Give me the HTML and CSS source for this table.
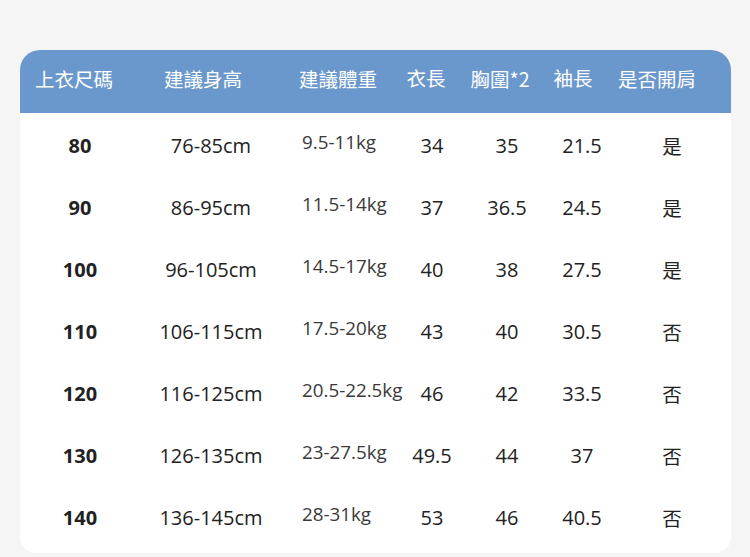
FILE: index.html
```html
<!DOCTYPE html>
<html lang="zh-Hant">
<head>
<meta charset="utf-8">
<link rel="stylesheet" href="styles.css">
</head>
<body>
<div class="card">
  <div class="head">
    <div class="h">上衣尺碼</div>
    <div class="h">建議身高</div>
    <div class="h">建議體重</div>
    <div class="h up">衣長</div>
    <div class="h">胸圍*2</div>
    <div class="h up">袖長</div>
    <div class="h">是否開肩</div>
  </div>
  <div class="body">
    <div class="row"><div class="size">80</div><div>76-85cm</div><div class="wt">9.5-11kg</div><div>34</div><div>35</div><div>21.5</div><div class="cjk">是</div></div>
    <div class="row"><div class="size">90</div><div>86-95cm</div><div class="wt">11.5-14kg</div><div>37</div><div>36.5</div><div>24.5</div><div class="cjk">是</div></div>
    <div class="row"><div class="size">100</div><div>96-105cm</div><div class="wt">14.5-17kg</div><div>40</div><div>38</div><div>27.5</div><div class="cjk">是</div></div>
    <div class="row"><div class="size">110</div><div>106-115cm</div><div class="wt">17.5-20kg</div><div>43</div><div>40</div><div>30.5</div><div class="cjk">否</div></div>
    <div class="row"><div class="size">120</div><div>116-125cm</div><div class="wt">20.5-22.5kg</div><div>46</div><div>42</div><div>33.5</div><div class="cjk">否</div></div>
    <div class="row"><div class="size">130</div><div>126-135cm</div><div class="wt">23-27.5kg</div><div>49.5</div><div>44</div><div>37</div><div class="cjk">否</div></div>
    <div class="row"><div class="size">140</div><div>136-145cm</div><div class="wt">28-31kg</div><div>53</div><div>46</div><div>40.5</div><div class="cjk">否</div></div>
  </div>
</div>
</body>
</html>
```

FILE: styles.css
```css
html, body {
  margin: 0;
  padding: 0;
  background: #f5f5f5;
}
body {
  width: 750px;
  height: 557px;
  overflow: hidden;
  font-family: "Open Sans", "Noto Sans CJK TC", sans-serif;
  color: #222;
}
.card {
  margin: 50px 0 0 20px;
  width: 711px;
  height: 503px;
  background: #fff;
  border-radius: 20px 20px 16px 16px;
  overflow: hidden;
}
.head {
  height: 63px;
  background: #6b98cc;
  display: grid;
  grid-template-columns: 108px 150px 120px 56px 92px 54px 114px;
  align-items: center;
  color: #fff;
  font-family: "Noto Sans CJK TC", sans-serif;
  font-size: 19.5px;
}
.h {
  text-align: center;
  white-space: nowrap;
  margin-top: -6px;
}
.h.up {
  margin-top: -9px;
}
.body {
  padding-top: 1px;
}
.row {
  height: 62px;
  display: grid;
  grid-template-columns: 120px 142px 113px 74px 76px 74px 106px;
  align-items: center;
  font-size: 20px;
  text-align: center;
  white-space: nowrap;
}
.row .size {
  font-weight: 700;
  color: #222;
}
.row .wt {
  text-align: left;
  padding-left: 20px;
  font-size: 18.8px;
  color: #3a3a3a;
  margin-top: -7px;
}
.row .cjk {
  font-family: "Noto Sans CJK TC", sans-serif;
  font-size: 19.5px;
}
```
